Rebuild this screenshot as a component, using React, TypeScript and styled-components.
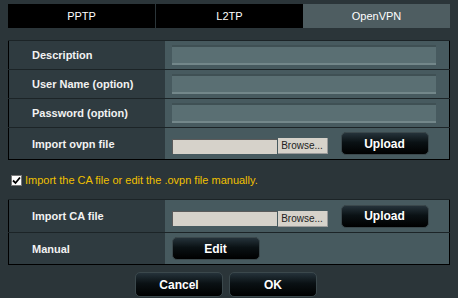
import React, { useState } from 'react';
import styled, { createGlobalStyle } from 'styled-components';

const GlobalStyle = createGlobalStyle`
    body {
        margin: 0;
        background: #2b3539;
        font-family: "Liberation Sans", Arial, sans-serif;
    }
`;

const Page = styled.div`
    width: 442px;
    padding: 4px 8px 0 8px;
`;

const Tabs = styled.div`
    display: grid;
    grid-template-columns: 147px 148px 147px;
    height: 24px;
    margin-bottom: 12px;
`;

const Tab = styled.div<{ $active: boolean }>`
    display: flex;
    align-items: center;
    justify-content: center;
    background: ${(p) => (p.$active ? '#4e5d61' : '#000')};
    border-left: ${(p) => (p.$active ? 'none' : '1px solid #2b3539')};
    color: #fff;
    font-size: 11px;
    &:first-child {
        border-left: none;
    }
`;

const Table = styled.table`
    width: 442px;
    border-collapse: collapse;
    border: 1px solid #000;
`;

const Row = styled.tr<{ $h: number }>`
    height: ${(p) => p.$h}px;
    border-top: 1px solid #1c2427;
`;

const Label = styled.th`
    width: 156px;
    padding: 0 0 0 23px;
    background: #2f3b40;
    color: #f2f2f2;
    font-size: 11px;
    font-weight: bold;
    text-align: left;
    box-sizing: border-box;
`;

const Value = styled.td`
    background: #475a5f;
    padding: 0 0 0 7px;
`;

const TextInput = styled.input`
    display: block;
    width: 264px;
    height: 20px;
    box-sizing: border-box;
    background: #5a6f73;
    border: none;
    border-top: 2px solid #3f5054;
    border-bottom: 2px solid #73878a;
    outline: none;
`;

const FileRow = styled.div`
    display: flex;
    align-items: center;
`;

const FileBox = styled.div`
    width: 104px;
    height: 14px;
    margin-top: 5px;
    background: #d6d2ca;
    border-top: 1px solid #5a5a5a;
    border-left: 1px solid #5a5a5a;
`;

const Browse = styled.div`
    width: 49px;
    height: 15px;
    margin-top: 5px;
    margin-left: 1px;
    background: #d6d2ca;
    border-bottom: 1px solid #9a9a9a;
    border-right: 1px solid #9a9a9a;
    color: #222;
    font-size: 10px;
    display: flex;
    align-items: center;
    justify-content: center;
`;

const DarkButton = styled.button<{ $w: number; $h: number }>`
    width: ${(p) => p.$w}px;
    height: ${(p) => p.$h}px;
    border-radius: 5px;
    border: 1px solid #3b484c;
    background: linear-gradient(to bottom, #25323a 0%, #0a1114 45%, #000 100%);
    color: #fff;
    font-family: "Liberation Sans", Arial, sans-serif;
    font-size: 12px;
    font-weight: bold;
    padding: 0;
    cursor: pointer;
`;

const UploadSlot = styled.div`
    margin-left: 13px;
    display: flex;
`;

const Notice = styled.label`
    display: flex;
    align-items: center;
    height: 18px;
    margin: 11px 0 10px 3px;
    color: #f0c000;
    font-size: 11px;
`;

const Check = styled.span`
    width: 9px;
    height: 9px;
    background: #fff;
    border: 1px solid #777;
    margin-right: 3px;
    display: flex;
    align-items: center;
    justify-content: center;
`;

const Footer = styled.div`
    display: flex;
    justify-content: center;
    gap: 6px;
    margin-top: 7px;
    padding-right: 6px;
`;

const FileField: React.FC = () => (
    <FileRow>
        <FileBox />
        <Browse>Browse...</Browse>
        <UploadSlot>
            <DarkButton $w={88} $h={23}>Upload</DarkButton>
        </UploadSlot>
    </FileRow>
);

const App: React.FC = () => {
    const [tab, setTab] = useState<string>('OpenVPN');
    const [manual, setManual] = useState<boolean>(true);

    return (
        <Page>
            <GlobalStyle />
            <Tabs>
                {['PPTP', 'L2TP', 'OpenVPN'].map((t) => (
                    <Tab key={t} $active={tab === t} onClick={() => setTab(t)}>
                        {t}
                    </Tab>
                ))}
            </Tabs>
            <Table>
                <tbody>
                    <Row $h={29}>
                        <Label>Description</Label>
                        <Value><TextInput /></Value>
                    </Row>
                    <Row $h={29}>
                        <Label>User Name (option)</Label>
                        <Value><TextInput /></Value>
                    </Row>
                    <Row $h={29}>
                        <Label>Password (option)</Label>
                        <Value><TextInput type="password" /></Value>
                    </Row>
                    <Row $h={32}>
                        <Label>Import ovpn file</Label>
                        <Value><FileField /></Value>
                    </Row>
                </tbody>
            </Table>
            <Notice onClick={() => setManual(!manual)}>
                <Check>
                    {manual && (
                        <svg width="9" height="9" viewBox="0 0 9 9">
                            <path d="M1 4.5 L3.5 7 L8 1.5" stroke="#000" strokeWidth="1.8" fill="none" />
                        </svg>
                    )}
                </Check>
                Import the CA file or edit the .ovpn file manually.
            </Notice>
            <Table>
                <tbody>
                    <Row $h={33}>
                        <Label>Import CA file</Label>
                        <Value><FileField /></Value>
                    </Row>
                    <Row $h={32}>
                        <Label>Manual</Label>
                        <Value>
                            <DarkButton $w={88} $h={23}>Edit</DarkButton>
                        </Value>
                    </Row>
                </tbody>
            </Table>
            <Footer>
                <DarkButton $w={88} $h={25}>Cancel</DarkButton>
                <DarkButton $w={88} $h={25}>OK</DarkButton>
            </Footer>
        </Page>
    );
};

export default App;
